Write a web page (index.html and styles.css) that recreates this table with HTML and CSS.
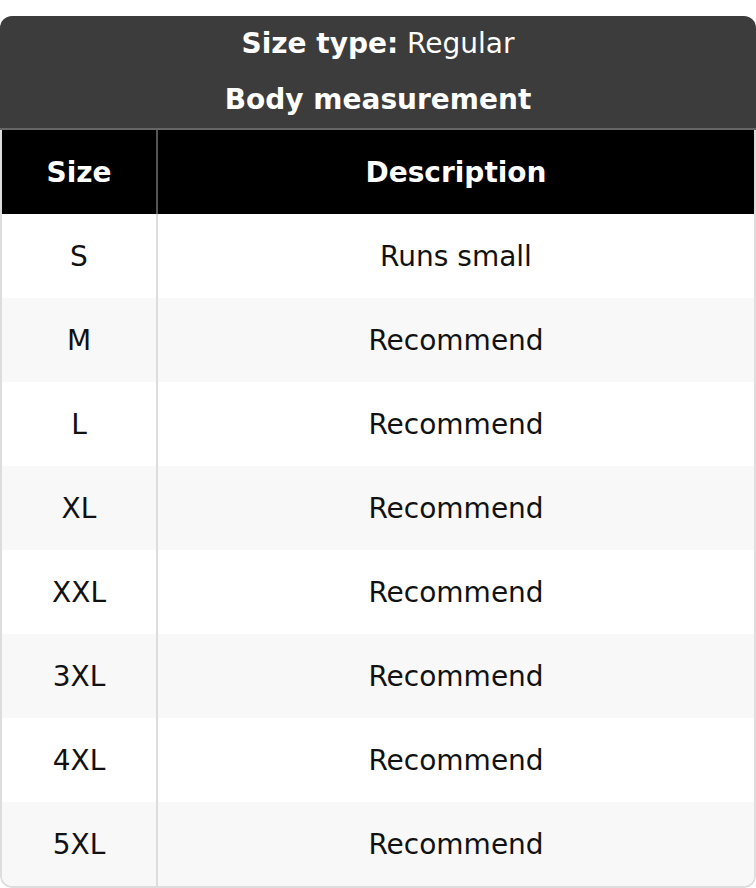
FILE: index.html
```html
<!DOCTYPE html>
<html>
<head>
<meta charset="utf-8">
<link rel="stylesheet" href="styles.css">
</head>
<body>
<div class="card">
  <div class="caption">
    <div class="cap-line"><b>Size type:</b> Regular</div>
    <div class="cap-line"><b>Body measurement</b></div>
  </div>
  <div class="table">
    <div class="row head">
      <div class="cell size">Size</div>
      <div class="cell desc">Description</div>
    </div>
    <div class="row"><div class="cell size">S</div><div class="cell desc">Runs small</div></div>
    <div class="row alt"><div class="cell size">M</div><div class="cell desc">Recommend</div></div>
    <div class="row"><div class="cell size">L</div><div class="cell desc">Recommend</div></div>
    <div class="row alt"><div class="cell size">XL</div><div class="cell desc">Recommend</div></div>
    <div class="row"><div class="cell size">XXL</div><div class="cell desc">Recommend</div></div>
    <div class="row alt"><div class="cell size">3XL</div><div class="cell desc">Recommend</div></div>
    <div class="row"><div class="cell size">4XL</div><div class="cell desc">Recommend</div></div>
    <div class="row alt last"><div class="cell size">5XL</div><div class="cell desc">Recommend</div></div>
  </div>
</div>
</body>
</html>
```

FILE: styles.css
```css
html, body {
  margin: 0;
  padding: 0;
  background: #fff;
}
body {
  padding-top: 16px;
  font-family: "DejaVu Sans", sans-serif;
  font-size: 28px;
  color: #111;
}
.card {
  width: 756px;
  border-radius: 12px;
  overflow: hidden;
  box-sizing: border-box;
}
.caption {
  background: #3c3c3c;
  color: #fff;
  text-align: center;
  border-bottom: 2px solid #666;
}
.cap-line {
  height: 56px;
  line-height: 56px;
}
.cap-line b {
  font-weight: bold;
}
.table {
  border-left: 2px solid #ddd;
  border-right: 2px solid #ddd;
  border-bottom: 2px solid #ddd;
  border-radius: 0 0 12px 12px;
  overflow: hidden;
}
.row {
  display: grid;
  grid-template-columns: 156px 1fr;
  height: 84px;
  background: #fff;
}
.row.alt {
  background: #f8f8f8;
}
.row.head {
  background: #000;
  color: #fff;
  font-weight: bold;
  margin-left: -2px;
  margin-right: -2px;
  border-left: 2px solid #555;
  border-right: 2px solid #555;
}
.cell {
  display: flex;
  align-items: center;
  justify-content: center;
}
.cell.size {
  border-right: 2px solid #ddd;
}
.row.head .cell.size {
  border-right-color: #555;
}
```
